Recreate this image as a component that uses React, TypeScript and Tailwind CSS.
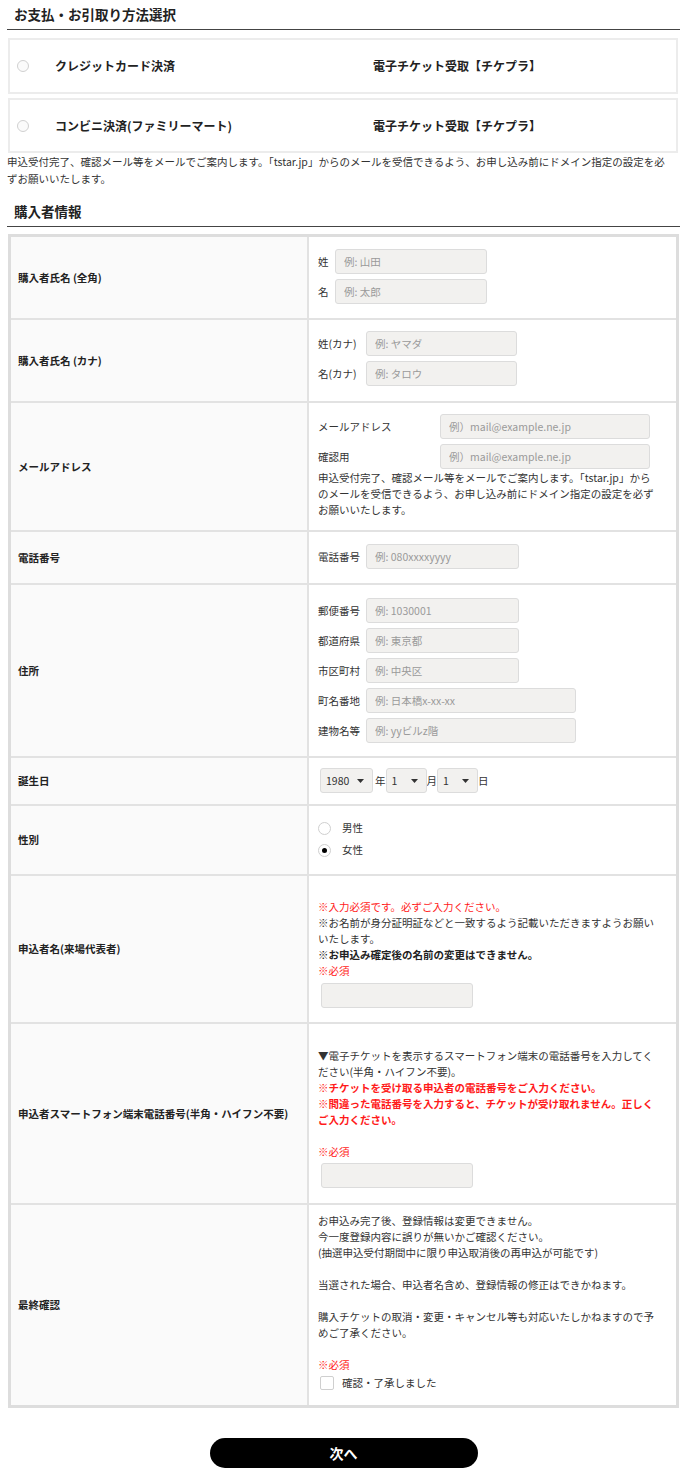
import React from "react";

const inputCls =
  "h-[25px] rounded-[3px] border border-[#dcdcdc] bg-[#f2f1ef] pl-[8px] text-[10.5px] text-[#333] outline-none placeholder:text-[#9a9a9a]";

function PayOption({ label, h }: { label: string; h: string }) {
  return (
    <div className={`flex ${h} items-center border-2 border-[#ececec] bg-white pl-[7px]`}>
      <span className="h-[12px] w-[12px] shrink-0 rounded-full border border-[#d0d0d0] bg-[#fbfbfb]" />
      <span className="ml-[26px] w-[318px] text-[12px] font-bold text-[#222]">{label}</span>
      <span className="text-[12px] font-bold text-[#222]">電子チケット受取【チケプラ】</span>
    </div>
  );
}

function Row({
  label,
  first,
  cell,
  children,
}: {
  label: string;
  first?: boolean;
  cell: string;
  children: React.ReactNode;
}) {
  return (
    <div className={`grid grid-cols-[296px_1fr] ${first ? "" : "border-t-2 border-[#e2e2e2]"}`}>
      <div className="flex items-center bg-[#fafafa] pl-[7px] text-[10.5px] font-bold text-[#222]">{label}</div>
      <div className={`border-l-2 border-[#e2e2e2] bg-white pl-[9px] pr-[16px] text-[10.5px] leading-[16px] text-[#333] ${cell}`}>
        {children}
      </div>
    </div>
  );
}

function Field({
  label,
  lw,
  gap,
  w,
  ph,
}: {
  label: string;
  lw: string;
  gap: string;
  w: string;
  ph: string;
}) {
  return (
    <div className="flex items-center">
      <span className={`${lw} shrink-0 whitespace-nowrap text-[10.5px] text-[#333]`}>{label}</span>
      <input className={`${gap} ${w} ${inputCls}`} placeholder={ph} />
    </div>
  );
}

function Sel({ value, w, ml }: { value: string; w: string; ml: string }) {
  return (
    <span className={`relative ${ml} inline-flex`}>
      <select
        defaultValue={value}
        className={`h-[25px] ${w} appearance-none rounded-[3px] border border-[#dcdcdc] bg-[#f2f1ef] pl-[5px] text-[10.5px] text-[#333] outline-none`}
      >
        <option value={value}>{value}</option>
      </select>
      <svg
        className="pointer-events-none absolute right-[9px] top-[11px]"
        width="7"
        height="4"
        viewBox="0 0 7 4"
      >
        <path d="M0 0h7L3.5 4z" fill="#333" />
      </svg>
    </span>
  );
}

function Radio({ checked }: { checked?: boolean }) {
  return (
    <span className="flex h-[13px] w-[13px] shrink-0 items-center justify-center rounded-full border border-[#cfcfcf] bg-white">
      {checked && <span className="h-[5px] w-[5px] rounded-full bg-black" />}
    </span>
  );
}

export default function App() {
  return (
    <div className="min-h-screen bg-white pb-[20px] pl-[7px] pr-[3px] font-['Noto_Sans_CJK_JP','Noto_Sans',sans-serif] text-[#333]">
      <h2 className="flex h-[30px] items-center border-b border-[#444] pl-[7px] text-[13.5px] font-bold leading-none text-[#222]">
        お支払・お引取り方法選択
      </h2>

      <div className="ml-[1px] mr-[2px] mt-[8px] flex flex-col gap-[4px]">
        <PayOption label="クレジットカード決済" h="h-[56px]" />
        <PayOption label="コンビニ決済(ファミリーマート)" h="h-[55px]" />
      </div>

      <p className="mr-[6px] text-[10.5px] leading-[17px] text-[#333]">
        申込受付完了、確認メール等をメールでご案内します。「tstar.jp」からのメールを受信できるよう、お申し込み前にドメイン指定の設定を必ずお願いいたします。
      </p>

      <h2 className="mt-[10px] flex h-[30px] items-center border-b border-[#444] pl-[7px] text-[13.5px] font-bold leading-none text-[#222]">
        購入者情報
      </h2>

      <div className="ml-[1px] mr-[1px] mt-[7px] border-[3px] border-[#dddddd]">
        <Row label="購入者氏名 (全角)" first cell="pt-[12px] pb-[14px]">
          <div className="flex flex-col gap-[5px]">
            <Field label="姓" lw="w-[11px]" gap="ml-[6px]" w="w-[152px]" ph="例: 山田" />
            <Field label="名" lw="w-[11px]" gap="ml-[6px]" w="w-[152px]" ph="例: 太郎" />
          </div>
        </Row>

        <Row label="購入者氏名 (カナ)" cell="pt-[11px] pb-[15px]">
          <div className="flex flex-col gap-[5px]">
            <Field label="姓(カナ)" lw="w-[44px]" gap="ml-[4px]" w="w-[151px]" ph="例: ヤマダ" />
            <Field label="名(カナ)" lw="w-[44px]" gap="ml-[4px]" w="w-[151px]" ph="例: タロウ" />
          </div>
        </Row>

        <Row label="メールアドレス" cell="pt-[11px] pb-[12px]">
          <div className="flex flex-col gap-[5px]">
            <Field label="メールアドレス" lw="w-[116px]" gap="ml-[6px]" w="w-[210px]" ph="例）mail@example.ne.jp" />
            <Field label="確認用" lw="w-[116px]" gap="ml-[6px]" w="w-[210px]" ph="例）mail@example.ne.jp" />
          </div>
          <p className="mt-[1px]">
            申込受付完了、確認メール等をメールでご案内します。「tstar.jp」からのメールを受信できるよう、お申し込み前にドメイン指定の設定を必ずお願いいたします。
          </p>
        </Row>

        <Row label="電話番号" cell="pt-[12px] pb-[14px]">
          <Field label="電話番号" lw="w-[44px]" gap="ml-[4px]" w="w-[153px]" ph="例: 080xxxxyyyy" />
        </Row>

        <Row label="住所" cell="pt-[13px] pb-[13px]">
          <div className="flex flex-col gap-[5px]">
            <Field label="郵便番号" lw="w-[44px]" gap="ml-[4px]" w="w-[153px]" ph="例: 1030001" />
            <Field label="都道府県" lw="w-[44px]" gap="ml-[4px]" w="w-[153px]" ph="例: 東京都" />
            <Field label="市区町村" lw="w-[44px]" gap="ml-[4px]" w="w-[153px]" ph="例: 中央区" />
            <Field label="町名番地" lw="w-[44px]" gap="ml-[4px]" w="w-[210px]" ph="例: 日本橋x-xx-xx" />
            <Field label="建物名等" lw="w-[44px]" gap="ml-[4px]" w="w-[210px]" ph="例: yyビルz階" />
          </div>
        </Row>

        <Row label="誕生日" cell="pt-[10px] pb-[11px]">
          <div className="flex items-center">
            <Sel value="1980" w="w-[53px]" ml="ml-[2px]" />
            <span className="ml-[2px]">年</span>
            <Sel value="1" w="w-[41px]" ml="ml-[0px]" />
            <span>月</span>
            <Sel value="1" w="w-[41px]" ml="ml-[0px]" />
            <span>日</span>
          </div>
        </Row>

        <Row label="性別" cell="pt-[11px] pb-[13px]">
          <div className="flex h-[22px] items-center">
            <Radio />
            <span className="ml-[11px]">男性</span>
          </div>
          <div className="flex h-[22px] items-center">
            <Radio checked />
            <span className="ml-[11px]">女性</span>
          </div>
        </Row>

        <Row label="申込者名(来場代表者)" cell="pt-[23px] pb-[14px]">
          <p className="text-[#ff1a1a]">※入力必須です。必ずご入力ください。</p>
          <p>※お名前が身分証明証などと一致するよう記載いただきますようお願いいたします。</p>
          <p className="font-bold text-[#222]">※お申込み確定後の名前の変更はできません。</p>
          <p className="text-[#ff1a1a]">※必須</p>
          <input className={`ml-[3px] mt-[4px] w-[152px] ${inputCls}`} />
        </Row>

        <Row label="申込者スマートフォン端末電話番号(半角・ハイフン不要)" cell="pt-[24px] pb-[15px]">
          <p>▼電子チケットを表示するスマートフォン端末の電話番号を入力してください(半角・ハイフン不要)。</p>
          <p className="font-bold text-[#ff1a1a]">※チケットを受け取る申込者の電話番号をご入力ください。</p>
          <p className="font-bold text-[#ff1a1a]">
            ※間違った電話番号を入力すると、チケットが受け取れません。正しくご入力ください。
          </p>
          <p className="mt-[16px] text-[#ff1a1a]">※必須</p>
          <input className={`ml-[3px] mt-[3px] w-[152px] ${inputCls}`} />
        </Row>

        <Row label="最終確認" cell="pt-[8px] pb-[13px]">
          <p>お申込み完了後、登録情報は変更できません。</p>
          <p>今一度登録内容に誤りが無いかご確認ください。</p>
          <p>(抽選申込受付期間中に限り申込取消後の再申込が可能です)</p>
          <p className="mt-[16px]">当選された場合、申込者名含め、登録情報の修正はできかねます。</p>
          <p className="mt-[16px]">
            購入チケットの取消・変更・キャンセル等も対応いたしかねますので予めご了承ください。
          </p>
          <p className="mt-[16px] text-[#ff1a1a]">※必須</p>
          <div className="flex h-[19px] items-center">
            <span className="ml-[2px] h-[14px] w-[14px] rounded-[2px] border border-[#cfcfcf] bg-white" />
            <span className="ml-[8px]">確認・了承しました</span>
          </div>
        </Row>
      </div>

      <div className="mt-[30px] flex justify-center">
        <button className="h-[30px] w-[268px] rounded-full bg-black text-[14px] font-bold text-white">次へ</button>
      </div>
    </div>
  );
}
